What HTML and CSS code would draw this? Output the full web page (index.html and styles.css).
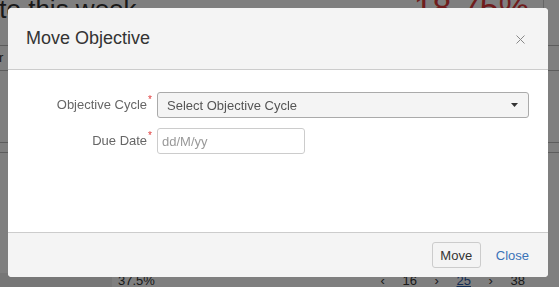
FILE: index.html
```html
<!DOCTYPE html>
<html lang="en">

<head>
  <title>Move Objective</title>
  <link rel="stylesheet" href="styles.css">
</head>

<body>
  <div class="page">
    <div class="pageHead">
      <span class="pageTitle">Progress to this week</span>
      <span class="pagePercent">18.75%</span>
    </div>
    <div class="pageRows">
      <div class="pageRow">Monitor</div>
      <div class="pageRow short"></div>
      <div class="pageRow thin"></div>
      <div class="pageRow mid"></div>
    </div>
    <div class="pageFoot">
      <span class="footBox"></span>
      <span class="footPercent">37.5%</span>
      <span class="footNav">&lsaquo; 16 &rsaquo; <u>25</u> &rsaquo; 38</span>
    </div>
  </div>

  <div class="overlay"></div>

  <div class="modal">
    <div class="modalHeader">
      <h2>Move Objective</h2>
      <span class="closeX">
        <svg width="9" height="9" viewBox="0 0 9 9">
          <path d="M0.5 0.5 L8.5 8.5 M8.5 0.5 L0.5 8.5" stroke="#888" stroke-width="1" fill="none" />
        </svg>
      </span>
    </div>
    <div class="modalBody">
      <div class="formGrid">
        <label class="label">Objective Cycle<span class="req">*</span></label>
        <div class="select">
          <span>Select Objective Cycle</span>
          <svg width="7" height="4" viewBox="0 0 7 4">
            <path d="M0 0 L7 0 L3.5 4 Z" fill="#333" />
          </svg>
        </div>
        <label class="label">Due Date<span class="req">*</span></label>
        <div class="dateRow">
          <input type="text" class="dateInput" placeholder="dd/M/yy" />
        </div>
      </div>
    </div>
    <div class="modalFooter">
      <button class="btn">Move</button>
      <a href="#" class="closeLink">Close</a>
    </div>
  </div>
</body>

</html>
```

FILE: styles.css
```css
html,
body {
  margin: 0;
  height: 100%;
  overflow: hidden;
}

body {
  font-family: "Liberation Sans", Arial, sans-serif;
  background-color: #fff;
  color: #333;
}

/* page behind the dialog */
.page {
  height: 100%;
  display: flex;
  flex-direction: column;
}

.pageHead {
  display: flex;
  justify-content: space-between;
  align-items: flex-start;
  height: 57px;
  margin-top: -12px;
  padding-right: 14px;
  border-right: 1px solid #ccc;
  margin-right: 15px;
}

.pageTitle {
  font-size: 26px;
  margin-left: -112px;
  margin-top: 6px;
}

.pagePercent {
  font-size: 34px;
  color: #e03a3a;
}

.pageRows {
  flex: 1;
}

.pageRow {
  border-top: 1px solid #bbb;
  height: 24px;
  font-size: 13px;
  line-height: 24px;
  text-indent: -40px;
}

.pageRow.short {
  height: 71px;
}

.pageRow.thin {
  height: 9px;
}

.pageRow.mid {
  height: 45px;
}

.pageFoot {
  display: flex;
  align-items: center;
  height: 14px;
  padding-top: 8px;
  font-size: 13px;
}

.footBox {
  width: 112px;
  height: 100%;
  background-color: #eee;
}

.footPercent {
  margin-left: 6px;
  flex: 1;
}

.footNav {
  margin-right: 34px;
  word-spacing: 14px;
}

.footNav u {
  color: #2a5aa8;
}

.overlay {
  position: fixed;
  inset: 0;
  background-color: rgba(0, 0, 0, 0.5);
}

/* dialog */
.modal {
  position: absolute;
  top: 8px;
  left: 8px;
  width: 540px;
  border-radius: 4px;
  overflow: hidden;
  background-color: #fff;
}

.modalHeader {
  display: flex;
  justify-content: space-between;
  align-items: center;
  height: 61px;
  padding: 0 23px 0 18px;
  background-color: #f4f4f4;
  border-bottom: 1px solid #ccc;
}

.modalHeader h2 {
  margin: 0;
  font-size: 18px;
  font-weight: normal;
  color: #333;
}

.closeX {
  display: flex;
  margin-top: 1px;
}

.modalBody {
  height: 162px;
  box-sizing: border-box;
  padding: 22px 19px 0 0;
}

.formGrid {
  display: grid;
  grid-template-columns: 144px 1fr;
  column-gap: 5px;
  row-gap: 10px;
}

.label {
  text-align: right;
  font-size: 13px;
  color: #666;
  line-height: 26px;
}

.req {
  color: #e03a3a;
  font-size: 10px;
  vertical-align: top;
  line-height: 16px;
  margin-left: 1px;
}

.select {
  display: flex;
  justify-content: space-between;
  align-items: center;
  height: 26px;
  box-sizing: border-box;
  padding: 0 10px 0 9px;
  background-color: #f4f4f4;
  border: 1px solid #aaa;
  border-radius: 3px;
  font-size: 13px;
  color: #555;
}

.dateInput {
  width: 148px;
  height: 26px;
  box-sizing: border-box;
  padding: 0 4px;
  border: 1px solid #ccc;
  border-radius: 3px;
  font-family: "Liberation Sans", Arial, sans-serif;
  font-size: 13px;
}

.dateInput::placeholder {
  color: #999;
}

.modalFooter {
  display: flex;
  justify-content: flex-end;
  align-items: center;
  height: 44px;
  padding-right: 19px;
  background-color: #f4f4f4;
  border-top: 1px solid #ccc;
}

.btn {
  height: 26px;
  width: 49px;
  padding: 0;
  background-color: #f4f4f4;
  border: 1px solid #ccc;
  border-radius: 3px;
  font-family: "Liberation Sans", Arial, sans-serif;
  font-size: 13px;
  color: #333;
}

.closeLink {
  margin-left: 15px;
  font-size: 13px;
  color: #3a73b8;
  text-decoration: none;
}
```
